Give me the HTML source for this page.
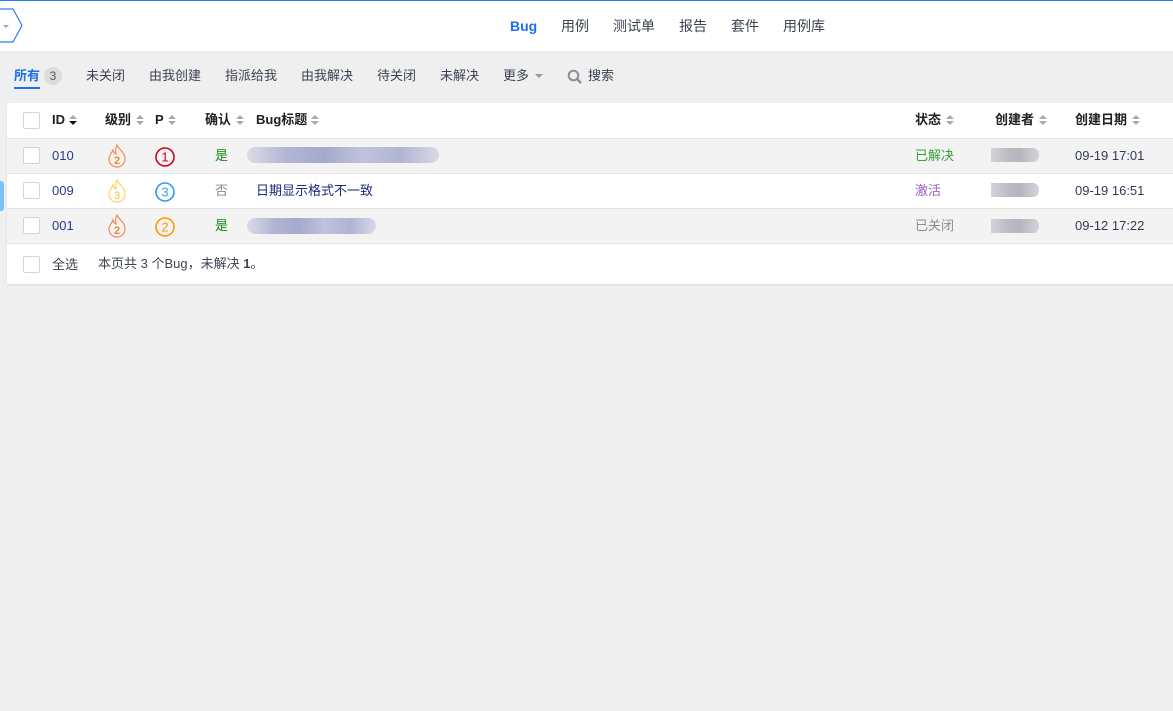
<!DOCTYPE html>
<html><head><meta charset="utf-8"><style>
*{margin:0;padding:0;box-sizing:border-box}
body{width:1173px;height:711px;background:#efefef;font-family:"Liberation Sans","Noto Sans CJK SC",sans-serif;font-size:13px;line-height:16px;color:#313c52;position:relative;overflow:hidden}
.a{position:absolute;white-space:nowrap;line-height:16px}
.top{position:absolute;left:0;top:0;width:1173px;height:51px;background:#fff;border-top:1px solid #2e7ff0}
.nav{top:18px;font-size:14px;color:#3c4353}
.tab{top:68px;color:#3c4353}
.panel{position:absolute;left:7px;top:103px;width:1175px;height:181px;background:#fff;border-radius:3px;box-shadow:0 1px 2px rgba(0,0,0,.08)}
.row{position:absolute;left:7px;width:1175px;height:35px;border-top:1px solid #e4e4e4}
.cb{position:absolute;left:23px;width:17px;height:17px;border:1px solid #d4d4d4;border-radius:2px;background:#fff}
.h{top:112px;font-weight:bold;color:#202020}
.s{position:absolute;top:2px;width:8px;height:12px}
.blur{position:absolute;height:16px;border-radius:8px;background:linear-gradient(90deg,#dcdde6,#b3b6d3 20%,#a5a9cc 40%,#c0c3dc 60%,#b0b4d4 80%,#d8dae6)}
.ub{position:absolute;left:991px;width:48px;height:14px;border-radius:0 6px 6px 0;background:linear-gradient(90deg,#d6d2d9,#bdb8c0 40%,#b5b5bd 60%,#d4d4da)}
</style></head><body>
<div class="top"></div>
<svg class="a" style="left:0;top:8px" width="24" height="36"><path d="M0 1H13L22 17.5L13 34H0" fill="#fff" stroke="#2e7ff0" stroke-width="1.2"/><path d="M3 17l3 3 3-3z" fill="#8ba6d6"/></svg>
<div class="a nav" style="left:510px;color:#1e6ff0;font-weight:bold">Bug</div>
<div class="a nav" style="left:561px">用例</div>
<div class="a nav" style="left:613px">测试单</div>
<div class="a nav" style="left:679px">报告</div>
<div class="a nav" style="left:731px">套件</div>
<div class="a nav" style="left:783px">用例库</div>

<div class="a tab" style="left:14px;color:#1e6ff0;font-weight:bold">所有</div>
<div class="a" style="left:44px;top:67px;width:18px;height:18px;border-radius:9px;background:#dcdcdc;font-size:12px;text-align:center;line-height:18px;color:#555">3</div>
<div class="a" style="left:14px;top:87px;width:26px;height:2px;background:#1e6ff0"></div>
<div class="a tab" style="left:86px">未关闭</div>
<div class="a tab" style="left:149px">由我创建</div>
<div class="a tab" style="left:225px">指派给我</div>
<div class="a tab" style="left:301px">由我解决</div>
<div class="a tab" style="left:377px">待关闭</div>
<div class="a tab" style="left:440px">未解决</div>
<div class="a tab" style="left:503px">更多</div>
<svg class="a" style="left:535px;top:74px" width="8" height="5"><path d="M0 0h8L4 4z" fill="#999"/></svg>
<svg class="a" style="left:567px;top:69px" width="16" height="16"><circle cx="6.5" cy="6.5" r="4.8" fill="none" stroke="#8a8f99" stroke-width="2"/><path d="M10 10l4 4" stroke="#8a8f99" stroke-width="2.4"/></svg>
<div class="a tab" style="left:588px">搜索</div>

<div class="panel"></div>
<div class="row" style="top:138px;background:#f3f3f4"></div>
<div class="row" style="top:173px;background:#fff"></div>
<div class="row" style="top:208px;background:#f3f3f4"></div>
<div class="row" style="top:243px;background:#fff;height:40px"></div>
<div class="a" style="left:0;top:181px;width:4px;height:30px;background:#7cc1f3;border-radius:0 3px 3px 0"></div>

<div class="cb" style="top:112px"></div>
<div class="cb" style="top:147px"></div>
<div class="cb" style="top:182px"></div>
<div class="cb" style="top:217px"></div>
<div class="cb" style="top:256px"></div>

<div class="a h" style="left:52px">ID</div>
<svg class="a" style="left:69px;top:114px" width="8" height="12"><path d="M0 5L4 1L8 5z" fill="#a6a9b0"/><path d="M0 7L4 11L8 7z" fill="#111"/></svg>
<div class="a h" style="left:105px">级别</div>
<svg class="a" style="left:136px;top:114px" width="8" height="12"><path d="M0 5L4 1L8 5zM0 7L4 11L8 7z" fill="#a6a9b0"/></svg>
<div class="a h" style="left:155px">P</div>
<svg class="a" style="left:168px;top:114px" width="8" height="12"><path d="M0 5L4 1L8 5zM0 7L4 11L8 7z" fill="#a6a9b0"/></svg>
<div class="a h" style="left:205px">确认</div>
<svg class="a" style="left:236px;top:114px" width="8" height="12"><path d="M0 5L4 1L8 5zM0 7L4 11L8 7z" fill="#a6a9b0"/></svg>
<div class="a h" style="left:256px">Bug标题</div>
<svg class="a" style="left:311px;top:114px" width="8" height="12"><path d="M0 5L4 1L8 5zM0 7L4 11L8 7z" fill="#a6a9b0"/></svg>
<div class="a h" style="left:915px">状态</div>
<svg class="a" style="left:946px;top:114px" width="8" height="12"><path d="M0 5L4 1L8 5zM0 7L4 11L8 7z" fill="#a6a9b0"/></svg>
<div class="a h" style="left:995px">创建者</div>
<svg class="a" style="left:1039px;top:114px" width="8" height="12"><path d="M0 5L4 1L8 5zM0 7L4 11L8 7z" fill="#a6a9b0"/></svg>
<div class="a h" style="left:1075px">创建日期</div>
<svg class="a" style="left:1132px;top:114px" width="8" height="12"><path d="M0 5L4 1L8 5zM0 7L4 11L8 7z" fill="#a6a9b0"/></svg>

<div class="a" style="left:52px;top:148px;color:#2a3a8c">010</div>
<div class="a" style="left:52px;top:183px;color:#2a3a8c">009</div>
<div class="a" style="left:52px;top:218px;color:#2a3a8c">001</div>

<svg class="a" style="left:106px;top:144px" width="22" height="24"><path d="M11 1C13 6 19 8 19 15A8 8 0 0 1 3 15C3 11 6 9 7 6C8 9 9 10 10 10C9 6 10 3 11 1Z" fill="none" stroke="#f58a5a" stroke-width="1.2"/><text x="11" y="20" font-size="11" font-weight="bold" fill="#f08a2a" text-anchor="middle" font-family="Liberation Sans">2</text></svg>
<svg class="a" style="left:106px;top:179px" width="22" height="24"><path d="M11 1C13 6 19 8 19 15A8 8 0 0 1 3 15C3 11 6 9 7 6C8 9 9 10 10 10C9 6 10 3 11 1Z" fill="none" stroke="#ffd15c" stroke-width="1.2"/><text x="11" y="20" font-size="11" fill="#f3c230" text-anchor="middle" font-family="Liberation Sans">3</text></svg>
<svg class="a" style="left:106px;top:214px" width="22" height="24"><path d="M11 1C13 6 19 8 19 15A8 8 0 0 1 3 15C3 11 6 9 7 6C8 9 9 10 10 10C9 6 10 3 11 1Z" fill="none" stroke="#f58a5a" stroke-width="1.2"/><text x="11" y="20" font-size="11" font-weight="bold" fill="#f08a2a" text-anchor="middle" font-family="Liberation Sans">2</text></svg>

<svg class="a" style="left:154px;top:146px" width="22" height="22"><circle cx="11" cy="11" r="9" fill="none" stroke="#d0021b" stroke-width="1.6"/><text x="11" y="15.5" font-size="13" fill="#d0021b" text-anchor="middle" font-family="Liberation Sans">1</text></svg>
<svg class="a" style="left:154px;top:181px" width="22" height="22"><circle cx="11" cy="11" r="9" fill="none" stroke="#2d9cf0" stroke-width="1.6"/><text x="11" y="15.5" font-size="13" fill="#2d9cf0" text-anchor="middle" font-family="Liberation Sans">3</text></svg>
<svg class="a" style="left:154px;top:216px" width="22" height="22"><circle cx="11" cy="11" r="9" fill="none" stroke="#ff9a00" stroke-width="1.6"/><text x="11" y="15.5" font-size="13" fill="#ff9a00" text-anchor="middle" font-family="Liberation Sans">2</text></svg>

<div class="a" style="left:215px;top:148px;color:#108a10">是</div>
<div class="a" style="left:215px;top:183px;color:#888">否</div>
<div class="a" style="left:215px;top:218px;color:#108a10">是</div>

<div class="blur" style="left:247px;top:147px;width:192px"></div>
<div class="a" style="left:256px;top:183px;color:#1a2a7c">日期显示格式不一致</div>
<div class="blur" style="left:247px;top:218px;width:129px"></div>

<div class="a" style="left:915px;top:148px;color:#3aa03a">已解决</div>
<div class="a" style="left:915px;top:183px;color:#9b5fc0">激活</div>
<div class="a" style="left:915px;top:218px;color:#8a8a95">已关闭</div>

<div class="ub" style="top:148px"></div>
<div class="ub" style="top:183px"></div>
<div class="ub" style="top:219px"></div>

<div class="a" style="left:1075px;top:148px">09-19 17:01</div>
<div class="a" style="left:1075px;top:183px">09-19 16:51</div>
<div class="a" style="left:1075px;top:218px">09-12 17:22</div>

<div class="a" style="left:52px;top:257px;color:#3c4353">全选</div>
<div class="a" style="left:98px;top:256px;color:#3c4353">本页共 3 个Bug，未解决 <b>1</b>。</div>
</body></html>
